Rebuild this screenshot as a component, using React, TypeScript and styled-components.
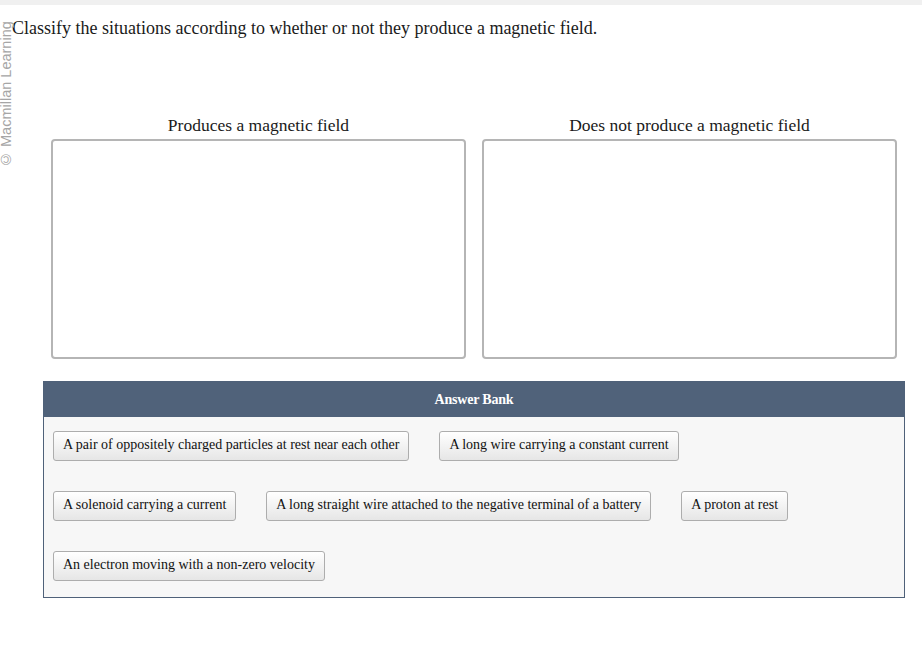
import React from "react";
import styled, { createGlobalStyle } from "styled-components";

const GlobalStyle = createGlobalStyle`
  html, body {
    margin: 0;
    padding: 0;
    background: #ffffff;
  }
  body {
    font-family: "Liberation Serif", "Times New Roman", serif;
    color: #1a1a1a;
  }
`;

const Page = styled.div`
  position: relative;
  width: 922px;
  height: 650px;
  background: #fff;
`;

const TopStrip = styled.div`
  height: 5px;
  background: #f0f0f0;
`;

// rotated copyright text sitting on the left edge
const Watermark = styled.div`
  position: absolute;
  left: 0;
  top: 15px;
  width: 13px;
  height: 158px;
  display: flex;
  align-items: center;
  justify-content: center;
  writing-mode: vertical-rl;
  transform: rotate(180deg);
  font-family: "Liberation Sans", Arial, sans-serif;
  font-size: 14.5px;
  color: #a6a6a6;
  white-space: nowrap;
  line-height: 13px;
`;

const Content = styled.div`
  padding: 0 0 0 12px;
`;

const Question = styled.p`
  margin: 0;
  padding-top: 12px;
  font-size: 18px;
  line-height: 22px;
`;

const Columns = styled.div`
  display: grid;
  grid-template-columns: 415px 415px;
  column-gap: 16px;
  margin: 75px 0 0 39px;
`;

const Column = styled.div`
  display: flex;
  flex-direction: column;
`;

const ColumnLabel = styled.div`
  text-align: center;
  font-size: 17.5px;
  line-height: 22px;
  height: 22px;
  margin-bottom: 3px;
`;

const DropZone = styled.div`
  height: 216px;
  border: 2px solid #b5b5b5;
  border-radius: 4px;
  background: #fff;
`;

const Bank = styled.div`
  margin: 22px 0 0 43px;
  width: 860px;
  border: 1px solid #4f6179;
  background: #f7f7f7;
`;

const BankHeader = styled.div`
  height: 35px;
  background: #50627a;
  color: #fff;
  font-weight: bold;
  font-size: 14px;
  display: flex;
  align-items: center;
  justify-content: center;
  letter-spacing: -0.2px;
`;

const BankBody = styled.div`
  display: flex;
  flex-wrap: wrap;
  gap: 30px 30px;
  padding: 14px 20px 16px 9px;
`;

const Chip = styled.div`
  height: 30px;
  box-sizing: border-box;
  padding: 0 9px 2px;
  display: flex;
  align-items: center;
  font-size: 14px;
  color: #111;
  border: 1px solid #adadad;
  border-radius: 3px;
  background: linear-gradient(#ffffff, #e6e6e6);
  white-space: nowrap;
`;

const answers = [
  "A pair of oppositely charged particles at rest near each other",
  "A long wire carrying a constant current",
  "A solenoid carrying a current",
  "A long straight wire attached to the negative terminal of a battery",
  "A proton at rest",
  "An electron moving with a non-zero velocity",
];

const App = () => {
  return (
    <Page>
      <GlobalStyle />
      <TopStrip />
      <Watermark>© Macmillan Learning</Watermark>
      <Content>
        <Question>Classify the situations according to whether or not they produce a magnetic field.</Question>
        <Columns>
          <Column>
            <ColumnLabel>Produces a magnetic field</ColumnLabel>
            <DropZone />
          </Column>
          <Column>
            <ColumnLabel>Does not produce a magnetic field</ColumnLabel>
            <DropZone />
          </Column>
        </Columns>
      </Content>
      <Bank>
        <BankHeader>Answer Bank</BankHeader>
        <BankBody>
          {answers.map((a) => (
            <Chip key={a}>{a}</Chip>
          ))}
        </BankBody>
      </Bank>
    </Page>
  );
};

export default App;
